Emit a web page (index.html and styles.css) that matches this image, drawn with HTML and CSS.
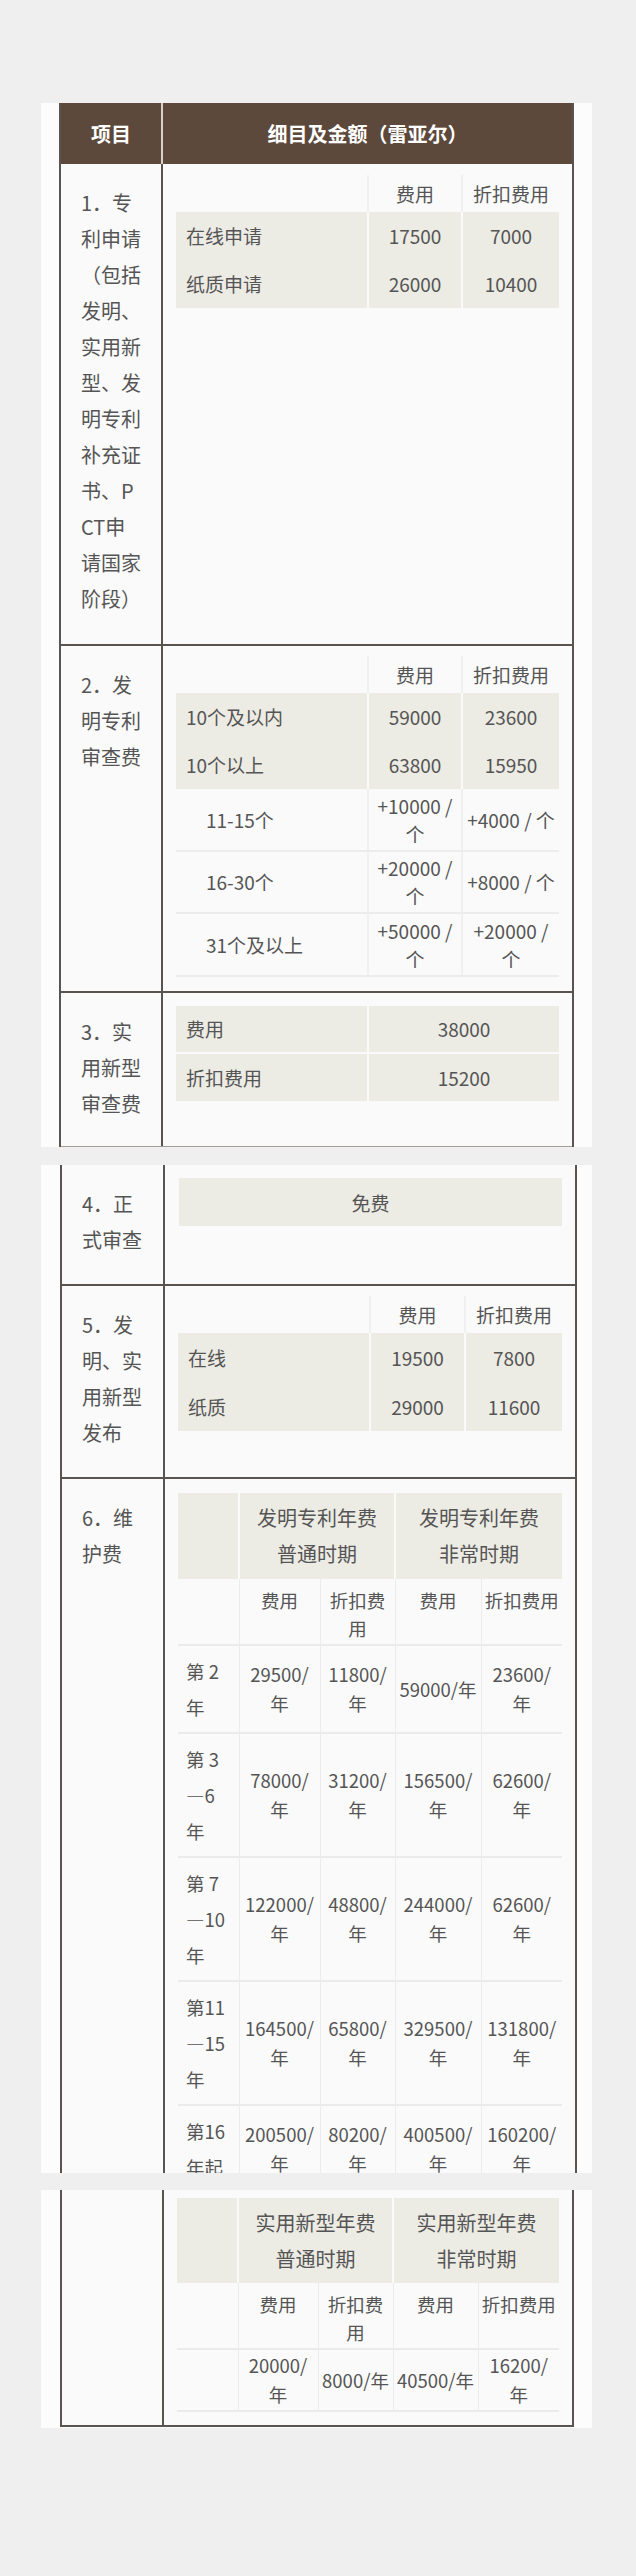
FILE: index.html
```html
<!DOCTYPE html>
<html lang="zh-CN">
<head>
<meta charset="utf-8">
<title>专利费用表</title>
<link rel="stylesheet" href="styles.css">
</head>
<body>
<main class="page">
  <section class="panel p1">
    <div class="tbl">
      <div class="row head">
        <div class="c1">项目</div>
        <div class="c2">细目及金额（雷亚尔）</div>
      </div>

      <div class="row r1">
        <div class="c1">1．专<br>利申请<br>（包括<br>发明、<br>实用新<br>型、发<br>明专利<br>补充证<br>书、P<br>CT申<br>请国家<br>阶段）</div>
        <div class="c2 t11">
          <table class="ft">
            <colgroup><col class="wa"><col class="wb"><col></colgroup>
            <tr class="th"><td></td><td>费用</td><td>折扣费用</td></tr>
            <tr class="bg"><td class="l">在线申请</td><td>17500</td><td>7000</td></tr>
            <tr class="bg"><td class="l">纸质申请</td><td>26000</td><td>10400</td></tr>
          </table>
        </div>
      </div>

      <div class="row r2">
        <div class="c1">2．发<br>明专利<br>审查费</div>
        <div class="c2 t10">
          <table class="ft">
            <colgroup><col class="wa"><col class="wb"><col></colgroup>
            <tr class="th"><td></td><td>费用</td><td>折扣费用</td></tr>
            <tr class="bg"><td class="l">10个及以内</td><td>59000</td><td>23600</td></tr>
            <tr class="bg"><td class="l">10个以上</td><td>63800</td><td>15950</td></tr>
            <tr class="wt"><td class="ind">11-15个</td><td>+10000 /<br>个</td><td>+4000 / 个</td></tr>
            <tr class="wt"><td class="ind">16-30个</td><td>+20000 /<br>个</td><td>+8000 / 个</td></tr>
            <tr class="wt last"><td class="ind">31个及以上</td><td>+50000 /<br>个</td><td>+20000 /<br>个</td></tr>
          </table>
        </div>
      </div>

      <div class="row r3">
        <div class="c1">3．实<br>用新型<br>审查费</div>
        <div class="c2 t13">
          <table class="ft">
            <colgroup><col class="wa"><col></colgroup>
            <tr class="bg b47"><td class="l">费用</td><td>38000</td></tr>
            <tr class="bg sep"><td class="l">折扣费用</td><td>15200</td></tr>
          </table>
        </div>
      </div>
    </div>
  </section>

  <section class="panel p2">
    <div class="tbl">
      <div class="row r4">
        <div class="c1">4．正<br>式审查</div>
        <div class="c2 t13">
          <div class="free">免费</div>
        </div>
      </div>

      <div class="row r5">
        <div class="c1">5．发<br>明、实<br>用新型<br>发布</div>
        <div class="c2 t10">
          <table class="ft">
            <colgroup><col class="wa"><col class="wb5"><col></colgroup>
            <tr class="th"><td></td><td>费用</td><td>折扣费用</td></tr>
            <tr class="bg b49"><td class="l">在线</td><td>19500</td><td>7800</td></tr>
            <tr class="bg b49"><td class="l">纸质</td><td>29000</td><td>11600</td></tr>
          </table>
        </div>
      </div>

      <div class="row r6a">
        <div class="c1">6．维<br>护费</div>
        <div class="c2 t14">
          <table class="mt">
            <colgroup><col class="m1"><col class="m2"><col class="m3"><col class="m4"><col></colgroup>
            <tr class="grp"><td></td><td colspan="2">发明专利年费<br>普通时期</td><td colspan="2">发明专利年费<br>非常时期</td></tr>
            <tr class="sub"><td></td><td>费用</td><td>折扣费<br>用</td><td>费用</td><td>折扣费用</td></tr>
            <tr class="d d2"><td class="yr">第 2<br>年</td><td>29500/<br>年</td><td>11800/<br>年</td><td>59000/年</td><td>23600/<br>年</td></tr>
            <tr class="d d3"><td class="yr">第 3<br>—6<br>年</td><td>78000/<br>年</td><td>31200/<br>年</td><td>156500/<br>年</td><td>62600/<br>年</td></tr>
            <tr class="d d3"><td class="yr">第 7<br>—10<br>年</td><td>122000/<br>年</td><td>48800/<br>年</td><td>244000/<br>年</td><td>62600/<br>年</td></tr>
            <tr class="d d3"><td class="yr">第11<br>—15<br>年</td><td>164500/<br>年</td><td>65800/<br>年</td><td>329500/<br>年</td><td>131800/<br>年</td></tr>
            <tr class="d d2"><td class="yr">第16<br>年起</td><td>200500/<br>年</td><td>80200/<br>年</td><td>400500/<br>年</td><td>160200/<br>年</td></tr>
          </table>
        </div>
      </div>
    </div>
  </section>

  <section class="panel p3">
    <div class="tbl">
      <div class="row r6b">
        <div class="c1"></div>
        <div class="c2 t8">
          <table class="mt mt3">
            <colgroup><col class="m1"><col class="m2b"><col class="m3"><col class="m4b"><col></colgroup>
            <tr class="grp g85"><td></td><td colspan="2">实用新型年费<br>普通时期</td><td colspan="2">实用新型年费<br>非常时期</td></tr>
            <tr class="sub"><td></td><td>费用</td><td>折扣费<br>用</td><td>费用</td><td>折扣费用</td></tr>
            <tr class="d d1"><td></td><td>20000/<br>年</td><td>8000/年</td><td>40500/年</td><td>16200/<br>年</td></tr>
          </table>
        </div>
      </div>
    </div>
  </section>
</main>
</body>
</html>
```

FILE: styles.css
```css
* {
  box-sizing: border-box;
}

html,
body {
  margin: 0;
  padding: 0;
  background: #efefef;
}

body {
  width: 636px;
  min-height: 2576px;
  font-family: "Noto Sans CJK SC", "Noto Sans", sans-serif;
  color: #555;
}

.page {
  padding-top: 103px;
}

.panel {
  margin-left: 41px;
  width: 551px;
  padding: 0 18px;
  background: #fcfcfc;
}

.p2 {
  margin-top: 18px;
}

.p3 {
  margin-top: 17px;
  padding-bottom: 1px;
}

.tbl {
  width: 515px;
  border-left: 2px solid #5a5450;
  border-right: 2px solid #5a5450;
  background: #fafafa;
}

.p2 .tbl {
  margin-left: 1px;
  width: 517px;
}

.p3 .tbl {
  margin-left: 1px;
  width: 514px;
}

.row {
  display: grid;
  grid-template-columns: 102px 1fr;
  border-bottom: 2px solid #5a5450;
}

.p2 .row {
  grid-template-columns: 103px 1fr;
}

.c1 {
  border-right: 2px solid #5a5450;
  padding: 21px 0 0 20px;
  font-size: 20px;
  line-height: 36px;
  white-space: nowrap;
}

.c2 {
  padding: 0 13px;
  min-width: 0;
}

.head {
  height: 61px;
  border-bottom: 0;
  background: #5c493c;
  color: #fff;
  font-weight: 700;
  font-size: 20px;
}

.head .c1,
.head .c2 {
  display: flex;
  align-items: center;
  justify-content: center;
  padding: 0;
}

.head .c1 {
  border-right: 2px solid #d9cfc5;
}

.r1 { height: 482px; }
.r2 { height: 347px; }
.r3 { height: 154px; border-bottom: 1px solid #a39d98; }
.r4 { height: 121px; }
.r5 { height: 193px; }
.r6a { height: 694px; border-bottom: 0; overflow: hidden; }
.r6b { height: 237px; }

.t8 { padding-top: 8px; }
.t10 { padding-top: 10px; }
.t11 { padding-top: 11px; }
.t13 { padding-top: 13px; }
.t14 { padding-top: 14px; }

/* fee tables */
.ft {
  width: 100%;
  border-collapse: collapse;
  table-layout: fixed;
  font-size: 19px;
  line-height: 28px;
  color: #555;
}

.wa { width: 192px; }
.wb { width: 94px; }
.wb5 { width: 95px; }

.ft td {
  padding: 0 3px;
  text-align: center;
  vertical-align: middle;
  white-space: nowrap;
}

.ft td + td {
  border-left: 2px solid #f0f0f0;
}

.ft .th td {
  height: 37px;
}

.ft .bg td {
  height: 48px;
  background: #ecebe4;
}

.ft .bg td + td {
  border-left-color: #fafafa;
}

.ft .b47 td { height: 47px; }
.ft .b49 td { height: 49px; }

.ft .sep td {
  border-top: 2px solid #fafafa;
}

.ft .wt td {
  height: 62px;
  border-bottom: 2px solid #ececec;
}

.ft .wt.last td {
  height: 63px;
}

.ft .l {
  text-align: left;
  padding-left: 10px;
}

.ft .ind {
  text-align: left;
  padding-left: 30px;
}

.free {
  height: 48px;
  margin-left: 1px;
  background: #ecebe4;
  display: flex;
  align-items: center;
  justify-content: center;
  font-size: 19px;
}

/* maintenance tables */
.mt {
  width: 100%;
  border-collapse: collapse;
  table-layout: fixed;
  font-size: 18.5px;
  line-height: 29px;
  color: #555;
}

.m1 { width: 61px; }
.m2 { width: 81px; }
.m2b { width: 80px; }
.m3 { width: 75px; }
.m4 { width: 86px; }
.m4b { width: 85px; }

.mt td {
  padding: 0 2px;
  text-align: center;
  vertical-align: middle;
  white-space: nowrap;
  border-left: 1px solid #ececec;
}

.mt td:first-child {
  border-left: 0;
}

.mt .grp td {
  height: 86px;
  background: #ecebe4;
  font-size: 20px;
  line-height: 36px;
  border-left: 2px solid #fafafa;
}

.mt .grp td:first-child {
  border-left: 0;
}

.mt .g85 td {
  height: 85px;
}

.mt .sub td {
  height: 66px;
  vertical-align: top;
  padding-top: 7px;
  line-height: 28px;
  border-bottom: 2px solid #ebebeb;
}

.mt .d td {
  border-bottom: 2px solid #ebebeb;
}

.mt .d1 td { height: 62px; }
.mt .d2 td { height: 86px; }
.mt .d3 td { height: 122px; }

.mt .yr {
  text-align: left;
  vertical-align: top;
  padding: 7px 0 7px 8px;
  line-height: 36px;
}
```
